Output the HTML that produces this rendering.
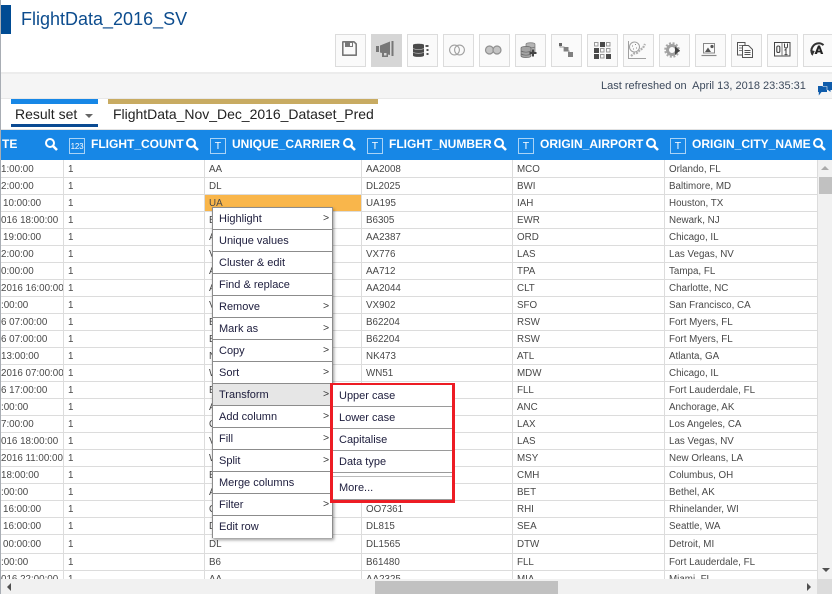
<!DOCTYPE html>
<html><head><meta charset="utf-8"><title>FlightData</title>
<style>
html,body{margin:0;padding:0;width:832px;height:594px;overflow:hidden;background:#fff}
body{position:relative;font-family:"Liberation Sans",Arial,sans-serif}
.a{position:absolute;white-space:nowrap}
.btn{position:absolute;top:34px;width:31px;height:33px;box-sizing:border-box;border:1px solid #dcdcdc;background:#fafafa}
.h{position:absolute;top:136px;color:#fff;font-weight:bold;font-size:12px;line-height:16px;white-space:nowrap}
.box{position:absolute;top:138px;width:16px;height:16px;box-sizing:border-box;border:1px solid #a9d3f6;color:#fff;font-size:10.5px;line-height:15px;text-align:center}
#tw{position:absolute;left:0;top:160px;width:818px;height:419px;overflow:hidden}
table{border-collapse:separate;border-spacing:0;table-layout:fixed;width:818px;color:#484848}
td{box-sizing:border-box;height:17px;padding:0 0 0 4px;border-right:1px solid #dcdcdc;border-bottom:1px solid #dcdcdc;white-space:nowrap;overflow:hidden;line-height:15px;font-size:9.8px}
td.z{padding-left:1px}
td.y{padding-left:3px}
tr.f td{height:18px;padding-top:1px}
tr.t td{height:19px}
tr.l td{padding-top:1px}
.s{background:#f9b64b}
.m{position:absolute;box-sizing:border-box;color:#1c1c3c;font-size:11px;line-height:23px;padding-left:6px;white-space:nowrap}
.mi{border-bottom:1px solid #8c8c8c;height:22px;left:213px;width:119px;background:#fff}
.mi i{position:absolute;left:110px;top:-1px;font-style:normal;font-size:10.5px;color:#333}
.si{left:333px;width:119px;height:22px;border-bottom:1px solid #9a9a9a;background:#fff}
</style></head><body>
<div class="a" style="left:0;top:0;width:1px;height:594px;background:#a8adb4;z-index:9"></div>
<div class="a" style="left:1px;top:5px;width:10px;height:29px;background:#004b93"></div>
<div class="a" style="left:21px;top:8px;font-size:18px;line-height:22px;color:#0c4c8e">FlightData_2016_SV</div>

<div class="btn" style="left:335px"></div><div class="btn" style="left:371px;background:#d6d6d6;border-color:#d6d6d6"></div><div class="btn" style="left:407px"></div><div class="btn" style="left:443px"></div><div class="btn" style="left:479px"></div><div class="btn" style="left:515px"></div><div class="btn" style="left:551px"></div><div class="btn" style="left:587px"></div><div class="btn" style="left:623px"></div><div class="btn" style="left:659px"></div><div class="btn" style="left:695px"></div><div class="btn" style="left:731px"></div><div class="btn" style="left:767px"></div><div class="btn" style="left:803px"></div>

<svg class="a" style="left:0;top:0;z-index:2" width="832" height="70" viewBox="0 0 832 70">
<!-- save -->
<g transform="translate(342,41)"><path d="M1 .8H12L14.2 3V14.2H.8V1Z" fill="#fafafa" stroke="#777" stroke-width="1.6" stroke-linejoin="round"/><path d="M3 1H11V6H3Z" fill="#777"/><rect x="8" y="2" width="2" height="3" fill="#fafafa"/></g>
<!-- megaphone -->
<g transform="translate(376,41)" fill="#777"><rect x="0" y="5" width="3" height="6"/><path d="M4 4.5L14 .5V14L4 11.5Z"/><rect x="15.5" y="0" width="2" height="15"/><path d="M6 11H12V16H6Z"/><rect x="8" y="12" width="2.5" height="2.5" fill="#d6d6d6"/></g>
<!-- db -->
<g transform="translate(413,43)"><path d="M0 2C0 .4 11 .4 11 2V12.5C11 14.4 0 14.4 0 12.5Z" fill="#4a4a4a"/><path d="M0 5.5C3 7 8 7 11 5.5M0 9.3C3 10.8 8 10.8 11 9.3" stroke="#aaa" stroke-width=".8" fill="none"/><rect x="12.5" y="2" width="3" height="2" fill="#555"/><rect x="13.5" y="6" width="2" height="2" fill="#555"/><rect x="13.5" y="10" width="2" height="2" fill="#555"/></g>
<!-- venn -->
<g fill="none" stroke="#a0a0a0" stroke-width="1.1"><circle cx="454.5" cy="50" r="4.9"/><circle cx="459.5" cy="50" r="4.9"/></g>
<!-- join -->
<g fill="#c4c4c4" stroke="#909090" stroke-width="1.2"><circle cx="489.5" cy="50" r="4"/><circle cx="497" cy="50" r="4"/></g>
<!-- db plus -->
<g transform="translate(521,42)"><path d="M5 2.2C5 .3 14 .3 14 2.2V10H5Z" fill="#b4b4b4" stroke="#777" stroke-width=".7"/><path d="M5 5C7.5 6.2 11.5 6.2 14 5" stroke="#777" stroke-width=".7" fill="none"/><path d="M0 6C0 4 10 4 10 6V14C10 16 0 16 0 14Z" fill="#a4a4a4" stroke="#666" stroke-width=".7"/><path d="M0 9C3 10.5 7 10.5 10 9M0 12C3 13.5 7 13.5 10 12" stroke="#666" stroke-width=".7" fill="none"/><path d="M12 7.5V14.5M8.5 11H15.5" stroke="#444" stroke-width="2"/></g>
<!-- steps -->
<g fill="#808080"><path d="M560 44V47H564V51H569V55" fill="none" stroke="#999" stroke-width="1"/><rect x="559" y="43" width="3" height="3" fill="#666"/><rect x="564" y="47" width="4.5" height="4.5"/><rect x="568" y="52" width="5" height="5"/></g>
<!-- grid -->
<g transform="translate(594,42)" fill="none" stroke="#999"><rect x=".5" y=".5" width="3.5" height="3.5"/><rect x="6" y="0" width="5" height="5" fill="#4a4a4a" stroke="none"/><rect x="12.5" y=".5" width="3.5" height="3.5"/><rect x="0" y="6" width="5" height="5" fill="#4a4a4a" stroke="none"/><rect x="6.5" y="6.5" width="3.5" height="3.5"/><rect x="12.5" y="6.5" width="3.5" height="3.5"/><rect x="0" y="12" width="5" height="5" fill="#4a4a4a" stroke="none"/><rect x="6.5" y="12.5" width="3.5" height="3.5"/><rect x="12" y="12" width="5" height="5" fill="#4a4a4a" stroke="none"/></g>
<!-- scatter -->
<g transform="translate(628,41)" fill="none" stroke="#a0a0a0"><path d="M.5 0V17.5H18" stroke-width="1"/><circle cx="6.5" cy="6" r="5" stroke-width="1"/><path d="M4 5h1M7 3.5h1M8 7h1M5 8h1" stroke="#888"/><path d="M3 15L6 12.5 9 12 12 9 15 7 17 3" stroke="#b0b0b0" stroke-width="2.2" stroke-dasharray="2 1"/></g>
<!-- gear -->
<g transform="translate(665,42)"><circle cx="7" cy="8" r="4.5" fill="none" stroke="#a0a0a0" stroke-width="3"/><circle cx="7" cy="8" r="6.8" fill="none" stroke="#a8a8a8" stroke-width="2" stroke-dasharray="2 1.6"/><path d="M10 4.5L15 8.5 10 13Z" fill="#444"/></g>
<!-- presentation -->
<g transform="translate(701,43)" fill="none" stroke="#888"><rect x="2.5" y=".5" width="11" height="9.5"/><path d="M.5 12.5H15.5" stroke-width="1.2"/><path d="M4 9L7 4.5 10 9Z" fill="#555" stroke="none"/><circle cx="11" cy="3.5" r="1.6" fill="#555" stroke="none"/></g>
<!-- docs -->
<g transform="translate(737,42)" fill="#fafafa" stroke="#555" stroke-width="1"><path d="M.5.5H8V13H.5Z"/><path d="M2 3.5H6M2 6H6M2 8.5H6" stroke-width=".8"/><path d="M5.5 3.5H11.5L15.5 7.5V15.5H5.5Z"/><path d="M7.5 8.5H13.5M7.5 10.5H13.5M7.5 12.5H13.5" stroke-width=".9"/></g>
<!-- 01 -->
<g transform="translate(774,42)" fill="none" stroke="#444"><rect x=".5" y=".5" width="15.5" height="13.5"/><path d="M8 .5V14" stroke="#777"/><rect x="2.8" y="4" width="3" height="6.5" rx="1.4" stroke-width="1.1"/><path d="M10.5 1.5V4.5A1.5 1.5 0 0 0 13.5 4.5V1.5" stroke-width="1"/><path d="M10.5 8.3L12 7.2V12.6M10.5 12.6H13.5" stroke-width="1"/></g>
<!-- A arrow -->
<g transform="translate(810,42)"><path d="M2.4 12.5C-.5 7 3.5 1.2 9 1.2 11 1.2 12.5 2.2 13.5 3.2" fill="none" stroke="#333" stroke-width="2"/><path d="M.2 8L4.8 9 2.4 14Z" fill="#333"/><path d="M4.5 12L8 3.5H10L13.2 12H10.8L10.3 10.4H7.6L7 12ZM8.2 8.7H9.8L9 6.2Z" fill="#222"/></g>
</svg>

<div class="a" style="left:1px;top:72px;width:831px;height:27px;box-sizing:border-box;background:#f5f5f5;border-top:2px solid #ececec;border-bottom:1px solid #e8e8e8"></div>
<div class="a" style="left:601px;top:80px;font-size:11px;line-height:13px;color:#3d4a5c">Last refreshed on&nbsp; April 13, 2018 23:35:31</div>
<svg class="a" style="left:818px;top:82px" width="14" height="14" viewBox="0 0 14 14"><path d="M5 0H14V8H12.5V10L10 8H5Z" fill="#0f5cab"/><path d="M0 4H9V10H3.5L.8 13.5V10H0Z" fill="#0f5cab"/><path d="M5 4V4.5H9V8" fill="none" stroke="#f5f5f5" stroke-width=".6"/></svg>

<div class="a" style="left:11px;top:99px;width:87px;height:5px;background:#1787e6"></div>
<div class="a" style="left:11px;top:124px;width:87px;height:3px;background:#0a4a92"></div>
<div class="a" style="left:15px;top:106px;font-size:14px;line-height:17px;color:#222">Result set</div>
<div class="a" style="left:85px;top:114px;width:0;height:0;border-left:4px solid transparent;border-right:4px solid transparent;border-top:4px solid #666"></div>
<div class="a" style="left:108px;top:99px;width:270px;height:5px;background:#c8ab62"></div>
<div class="a" style="left:113px;top:106px;font-size:14px;line-height:17px;letter-spacing:-.02px;color:#222">FlightData_Nov_Dec_2016_Dataset_Pred</div>

<div class="a" style="left:0;top:129px;width:832px;height:1px;background:#e2e2e2"></div>
<div class="a" style="left:0;top:130px;width:832px;height:30px;background:#1787e6"></div>
<div class="h" style="left:2px">TE</div>
<div class="box" style="left:69px;font-size:8px;letter-spacing:-.2px">123</div><div class="h" style="left:91px">FLIGHT_COUNT</div>
<div class="box" style="left:210px">T</div><div class="h" style="left:232px">UNIQUE_CARRIER</div>
<div class="box" style="left:367px">T</div><div class="h" style="left:389px">FLIGHT_NUMBER</div>
<div class="box" style="left:518px">T</div><div class="h" style="left:540px">ORIGIN_AIRPORT</div>
<div class="box" style="left:670px">T</div><div class="h" style="left:692px">ORIGIN_CITY_NAME</div>
<svg class="a" style="left:0;top:130px" width="832" height="30" viewBox="0 0 832 30">
<g fill="none" stroke="#fff" stroke-width="2">
<g transform="translate(45,8)"><circle cx="5" cy="5" r="4"/><path d="M8 8L12 12" stroke-width="2.6"/></g>
<g transform="translate(186,8)"><circle cx="5" cy="5" r="4"/><path d="M8 8L12 12" stroke-width="2.6"/></g>
<g transform="translate(343,8)"><circle cx="5" cy="5" r="4"/><path d="M8 8L12 12" stroke-width="2.6"/></g>
<g transform="translate(494,8)"><circle cx="5" cy="5" r="4"/><path d="M8 8L12 12" stroke-width="2.6"/></g>
<g transform="translate(646,8)"><circle cx="5" cy="5" r="4"/><path d="M8 8L12 12" stroke-width="2.6"/></g>
<g transform="translate(813,8)"><circle cx="5" cy="5" r="4"/><path d="M8 8L12 12" stroke-width="2.6"/></g>
</g></svg>

<div id="tw"><table>
<colgroup><col style="width:64px"><col style="width:141px"><col style="width:157px"><col style="width:151px"><col style="width:152px"><col style="width:153px"></colgroup>
<tr class="f"><td class="z">1:00:00</td><td>1</td><td>AA</td><td>AA2008</td><td>MCO</td><td>Orlando, FL</td></tr>
<tr><td class="z">2:00:00</td><td>1</td><td>DL</td><td>DL2025</td><td>BWI</td><td>Baltimore, MD</td></tr>
<tr><td class="y">10:00:00</td><td>1</td><td class="s">UA</td><td>UA195</td><td>IAH</td><td>Houston, TX</td></tr>
<tr><td class="z">016 18:00:00</td><td>1</td><td>B6</td><td>B6305</td><td>EWR</td><td>Newark, NJ</td></tr>
<tr><td class="y">19:00:00</td><td>1</td><td>AA</td><td>AA2387</td><td>ORD</td><td>Chicago, IL</td></tr>
<tr><td class="z">2:00:00</td><td>1</td><td>VX</td><td>VX776</td><td>LAS</td><td>Las Vegas, NV</td></tr>
<tr><td class="z">0:00:00</td><td>1</td><td>AA</td><td>AA712</td><td>TPA</td><td>Tampa, FL</td></tr>
<tr><td class="z">2016 16:00:00</td><td>1</td><td>AA</td><td>AA2044</td><td>CLT</td><td>Charlotte, NC</td></tr>
<tr><td class="z">:00:00</td><td>1</td><td>VX</td><td>VX902</td><td>SFO</td><td>San Francisco, CA</td></tr>
<tr><td class="z">6 07:00:00</td><td>1</td><td>B6</td><td>B62204</td><td>RSW</td><td>Fort Myers, FL</td></tr>
<tr><td class="z">6 07:00:00</td><td>1</td><td>B6</td><td>B62204</td><td>RSW</td><td>Fort Myers, FL</td></tr>
<tr><td class="z">13:00:00</td><td>1</td><td>NK</td><td>NK473</td><td>ATL</td><td>Atlanta, GA</td></tr>
<tr><td class="z">2016 07:00:00</td><td>1</td><td>WN</td><td>WN51</td><td>MDW</td><td>Chicago, IL</td></tr>
<tr><td class="z">6 17:00:00</td><td>1</td><td>B6</td><td>B6</td><td>FLL</td><td>Fort Lauderdale, FL</td></tr>
<tr><td class="z">:00:00</td><td>1</td><td>AS</td><td>AS</td><td>ANC</td><td>Anchorage, AK</td></tr>
<tr><td class="z">7:00:00</td><td>1</td><td>OO</td><td>OO</td><td>LAX</td><td>Los Angeles, CA</td></tr>
<tr><td class="z">016 18:00:00</td><td>1</td><td>VX</td><td>VX</td><td>LAS</td><td>Las Vegas, NV</td></tr>
<tr><td class="z">2016 11:00:00</td><td>1</td><td>WN</td><td>WN</td><td>MSY</td><td>New Orleans, LA</td></tr>
<tr><td class="z">18:00:00</td><td>1</td><td>B6</td><td>B6</td><td>CMH</td><td>Columbus, OH</td></tr>
<tr><td class="z">:00:00</td><td>1</td><td>AS</td><td>AS</td><td>BET</td><td>Bethel, AK</td></tr>
<tr><td class="y">16:00:00</td><td>1</td><td>OO</td><td>OO7361</td><td>RHI</td><td>Rhinelander, WI</td></tr>
<tr><td class="y">16:00:00</td><td>1</td><td>DL</td><td>DL815</td><td>SEA</td><td>Seattle, WA</td></tr>
<tr class="t"><td class="y">00:00:00</td><td>1</td><td>DL</td><td>DL1565</td><td>DTW</td><td>Detroit, MI</td></tr>
<tr><td class="z">:00:00</td><td>1</td><td>B6</td><td>B61480</td><td>FLL</td><td>Fort Lauderdale, FL</td></tr>
<tr class="l"><td class="z">016 22:00:00</td><td>1</td><td>AA</td><td>AA2325</td><td>MIA</td><td>Miami, FL</td></tr>
</table></div>

<!-- scrollbars -->
<div class="a" style="left:818px;top:160px;width:14px;height:419px;background:#f1f1f1"></div>
<div class="a" style="left:819px;top:177px;width:13px;height:17px;background:#c1c1c1"></div>
<div class="a" style="left:821px;top:166px;width:0;height:0;border-left:4px solid transparent;border-right:4px solid transparent;border-bottom:4px solid #aaa"></div>
<div class="a" style="left:822px;top:568px;width:0;height:0;border-left:4px solid transparent;border-right:4px solid transparent;border-top:4px solid #505050"></div>
<div class="a" style="left:1px;top:579px;width:816px;height:15px;background:#f1f1f1"></div>
<div class="a" style="left:375px;top:581px;width:183px;height:13px;background:#c1c1c1"></div>
<div class="a" style="left:7px;top:583px;width:0;height:0;border-top:4px solid transparent;border-bottom:4px solid transparent;border-right:4px solid #505050"></div>
<div class="a" style="left:807px;top:583px;width:0;height:0;border-top:4px solid transparent;border-bottom:4px solid transparent;border-left:4px solid #505050"></div>
<div class="a" style="left:817px;top:579px;width:15px;height:15px;background:#dcdcdc"></div>

<!-- context menu -->
<div class="a" style="left:212px;top:207px;width:121px;height:331px;box-sizing:border-box;border:1px solid #8c8c8c;border-bottom:2px solid #888;background:#fff;box-shadow:1px 2px 3px rgba(0,0,0,.4)"></div>
<div class="m mi" style="top:208px">Highlight<i>&gt;</i></div>
<div class="m mi" style="top:230px">Unique values</div>
<div class="m mi" style="top:252px">Cluster &amp; edit</div>
<div class="m mi" style="top:274px">Find &amp; replace</div>
<div class="m mi" style="top:296px">Remove<i>&gt;</i></div>
<div class="m mi" style="top:318px">Mark as<i>&gt;</i></div>
<div class="m mi" style="top:340px">Copy<i>&gt;</i></div>
<div class="m mi" style="top:362px">Sort<i>&gt;</i></div>
<div class="m mi" style="top:384px;background:#e6e6e6">Transform<i>&gt;</i></div>
<div class="m mi" style="top:406px">Add column<i>&gt;</i></div>
<div class="m mi" style="top:428px">Fill<i>&gt;</i></div>
<div class="m mi" style="top:450px">Split<i>&gt;</i></div>
<div class="m mi" style="top:472px">Merge columns</div>
<div class="m mi" style="top:494px">Filter<i>&gt;</i></div>
<div class="m mi" style="top:516px;border-bottom:0">Edit row</div>

<!-- submenu -->
<div class="a" style="left:330px;top:383px;width:125px;height:120px;box-sizing:border-box;border:3px solid #ed1c24;background:#fff"></div>
<div class="m si" style="top:385px">Upper case</div>
<div class="m si" style="top:407px">Lower case</div>
<div class="m si" style="top:429px">Capitalise</div>
<div class="m si" style="top:451px">Data type</div>
<div class="a" style="left:333px;top:476px;width:119px;height:1px;background:#bbb"></div>
<div class="m" style="left:333px;top:477px;width:119px;height:22px">More...</div>
<div class="a" style="left:333px;top:499px;width:119px;height:1px;background:#999"></div>
</body></html>
